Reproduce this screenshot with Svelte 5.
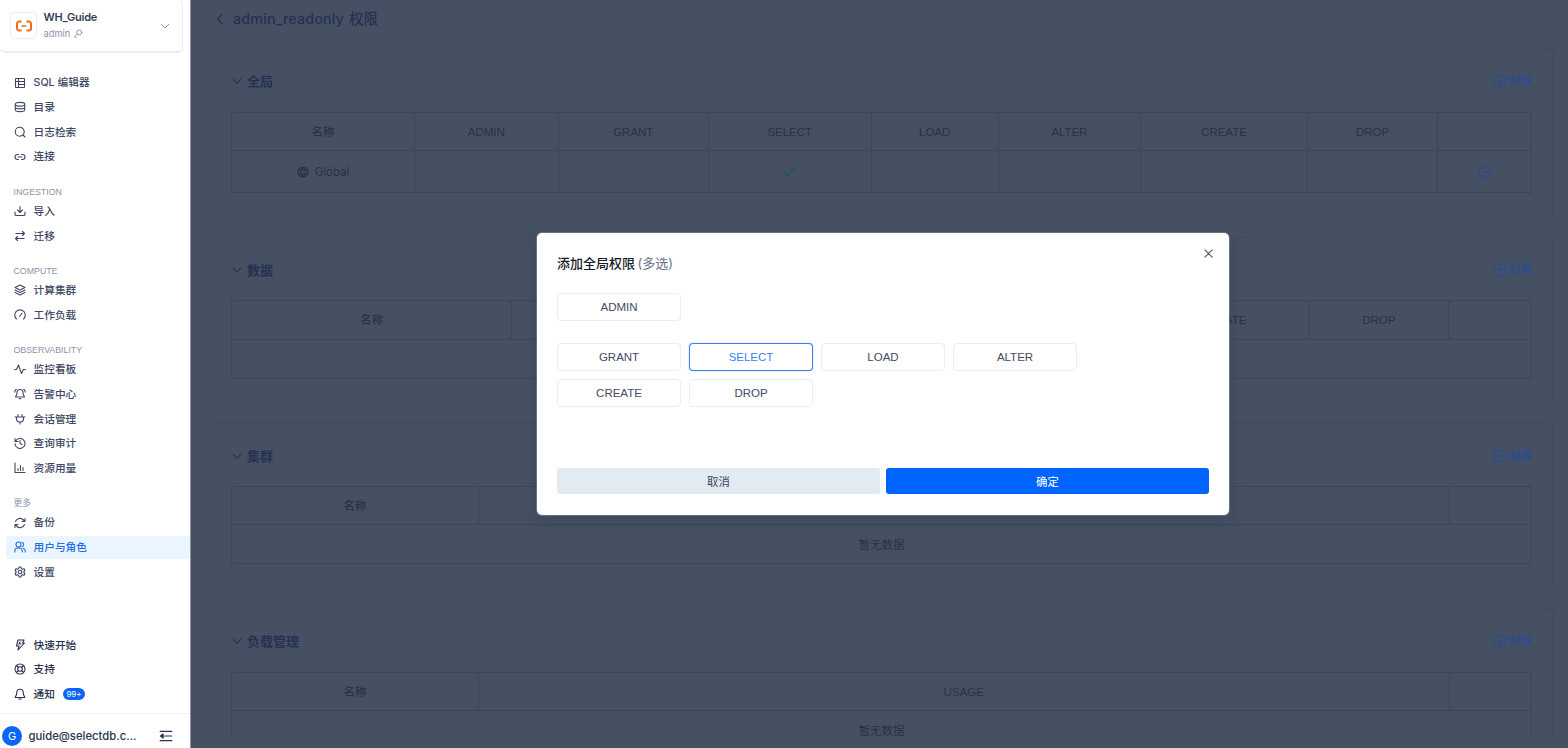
<script lang="ts">
  type Item = { icon: string; label: string; active?: boolean; badge?: string };
  type Group = { title?: string; items: Item[] };
  type Section = { title: string; cols: string[]; widths: number[]; global?: boolean };

  const icons: Record<string, string> = {
    table: 'M4 3h16a1 1 0 0 1 1 1v16a1 1 0 0 1-1 1H4a1 1 0 0 1-1-1V4a1 1 0 0 1 1-1zM9 3v18M3 9h18M9 15h12',
    database: 'M2.5 6.5c0-5 19-5 19 0s-19 5-19 0zM2.5 6.5v11c0 5 19 5 19 0v-11M2.5 12c0 5 19 5 19 0',
    search: 'M20.500 11.500a9 9 0 1 1-18 0 9 9 0 0 1 18 0zM18 18l4 4',
    link: 'M9 17H7A5 5 0 0 1 7 7h2M15 7h2a5 5 0 0 1 0 10h-2M8 12h8',
    download: 'M2 14v5a2 2 0 0 0 2 2h16a2 2 0 0 0 2-2v-5M7 10l5 5 5-5M12 15V3',
    swap: 'M17 3l4 4-4 4M21 7H4M7 21l-4-4 4-4M3 17h17',
    layers: 'M12 2L2 7l10 5 10-5-10-5zM2 12l10 5 10-5M2 17l10 5 10-5',
    gauge: 'M5 20a10.500 10.500 0 1 1 14 0M11.500 14.500l4.500-6',
    activity: 'M1 13h4l4-9 6 17 4-8h4',
    alarm: 'M6 9a6 6 0 0 1 12 0c0 6 3 8 3 9H3c0-1 3-3 3-9zM10 21.500h4M1.500 8c0-2 1-4 3-5.500M22.500 8c0-2-1-4-3-5.500',
    plug: 'M12 22v-4M8 7V3M16 7V3M2 8h20M5 8v4a7 6 0 0 0 14 0V8',
    history: 'M2 3v6h6M3 8.500A10 10 0 1 1 2 13M12 7v6l4 2',
    chart: 'M2 2v19h20M8 17v-4M13 17V7M18 17v-6',
    refresh: 'M22 3v6h-6M2 21v-6h6M3 9a9.500 9.500 0 0 1 15.500-3.500L22 9M2 15l3.500 3.500A9.500 9.500 0 0 0 21 15',
    users: 'M1.500 22v-2a6 6 0 0 1 6-6h3a6 6 0 0 1 6 6v2M14 7a5 5 0 1 1-10 0 5 5 0 0 1 10 0zM16 2.300a5 5 0 0 1 0 9.400M22.500 22v-2a6 6 0 0 0-4-5.500',
    gear: 'M10 2h4l.7 3 2.300 1.300 3-1 2 3.500L19.800 11v2l2.200 2.200-2 3.500-3-1-2.300 1.300-.7 3h-4l-.7-3L7 17.700l-3 1-2-3.500L4.200 13v-2L2 8.800l2-3.500 3 1L9.300 5zM15.500 12a3.500 3.500 0 1 1-7 0 3.500 3.500 0 0 1 7 0z',
    bolt: 'M8 2h12l-3 6h4L8 22l2-8H5L8 2zM12 6l-2 4h4',
    support: 'M22 12a10 10 0 1 1-20 0 10 10 0 0 1 20 0zM16.500 12a4.500 4.500 0 1 1-9 0 4.500 4.500 0 0 1 9 0zM5 5l4 4M15 9l4-4M15 15l4 4M9 15l-4 4',
    bell: 'M5.500 9a6.500 6.500 0 0 1 13 0c0 6 3 8 3 10h-19c0-2 3-4 3-10zM9.500 22h5',
    key: 'M21 8a6 6 0 1 1-12 0 6 6 0 0 1 12 0zM10.500 12.500L3 20M5 18l3 3',
    down: 'M3 8l9 9 9-9',
    left: 'M16 3l-9 9 9 9',
    fold: 'M2 4h20M11 12h11M2 20h20M7 8.500L2.500 12 7 15.500zM3 12h6',
    plus: 'M22 12a10 10 0 1 1-20 0 10 10 0 0 1 20 0zM12 8v8M8 12h8',
    minus: 'M22 12a10 10 0 1 1-20 0 10 10 0 0 1 20 0zM8 12h8',
    globe: 'M22 12a10 10 0 1 1-20 0 10 10 0 0 1 20 0zM12 2c-6 6-6 14 0 20M12 2c6 6 6 14 0 20M3.500 8h17M3.500 16h17',
    check: 'M2 13l6 6L22 4',
    close: 'M4 4l16 16M20 4L4 20',
  };

  const groups: Group[] = [
    {
      items: [
        { icon: 'table', label: 'SQL 编辑器' },
        { icon: 'database', label: '目录' },
        { icon: 'search', label: '日志检索' },
        { icon: 'link', label: '连接' },
      ],
    },
    {
      title: 'INGESTION',
      items: [
        { icon: 'download', label: '导入' },
        { icon: 'swap', label: '迁移' },
      ],
    },
    {
      title: 'COMPUTE',
      items: [
        { icon: 'layers', label: '计算集群' },
        { icon: 'gauge', label: '工作负载' },
      ],
    },
    {
      title: 'OBSERVABILITY',
      items: [
        { icon: 'activity', label: '监控看板' },
        { icon: 'alarm', label: '告警中心' },
        { icon: 'plug', label: '会话管理' },
        { icon: 'history', label: '查询审计' },
        { icon: 'chart', label: '资源用量' },
      ],
    },
    {
      title: '更多',
      items: [
        { icon: 'refresh', label: '备份' },
        { icon: 'users', label: '用户与角色', active: true },
        { icon: 'gear', label: '设置' },
      ],
    },
  ];

  const helpItems: Item[] = [
    { icon: 'bolt', label: '快速开始' },
    { icon: 'support', label: '支持' },
    { icon: 'bell', label: '通知', badge: '99+' },
  ];

  const sections: Section[] = [
    {
      title: '全局',
      cols: ['名称', 'ADMIN', 'GRANT', 'SELECT', 'LOAD', 'ALTER', 'CREATE', 'DROP', ''],
      widths: [183, 143.5, 150.5, 162.5, 127.5, 142, 167, 130, 93],
      global: true,
    },
    {
      title: '数据',
      cols: ['名称', 'GRANT', 'SELECT', 'LOAD', 'ALTER', 'CREATE', 'DROP', ''],
      widths: [280, 156, 156, 156, 157, 171, 139, 82],
    },
    { title: '集群', cols: ['名称', 'USAGE', ''], widths: [247, 971, 81.5] },
    { title: '负载管理', cols: ['名称', 'USAGE', ''], widths: [247, 971, 81.5] },
  ];

  const privileges = ['GRANT', 'SELECT', 'LOAD', 'ALTER', 'CREATE', 'DROP'];
  let selected = $state(['SELECT']);
  let open = $state(true);

  function toggle(name: string) {
    selected = selected.includes(name) ? selected.filter((n) => n !== name) : [...selected, name];
  }

  const columns = (widths: number[]) => widths.map((w) => `${w}fr`).join(' ');
</script>

{#snippet icon(name: string, size = 12, stroke = 2)}
  <svg class="icon" width={size} height={size} viewBox="0 0 24 24" stroke-width={stroke}>
    <path d={icons[name]} />
  </svg>
{/snippet}

{#snippet navItem(item: Item)}
  <div class="nav-item" class:active={item.active}>
    {@render icon(item.icon, 12, 2.200)}
    <span class="label">{item.label}</span>
    {#if item.badge}<span class="badge">{item.badge}</span>{/if}
  </div>
{/snippet}

<div class="app">
  <aside class="sidebar">
    <div class="warehouse">
      <div class="logo">
        <svg width="18" height="14" viewBox="0 0 18 14">
          <path d="M6.500 2.500H4.200A2.200 2.200 0 0 0 2 4.700v4.600a2.200 2.200 0 0 0 2.200 2.200h2.300M11.500 2.500h2.300A2.200 2.200 0 0 1 16 4.700v4.600a2.200 2.200 0 0 1-2.200 2.200h-2.300" stroke-width="2" />
          <path d="M6.500 7h5" stroke-width="1.500" />
        </svg>
      </div>
      <div class="who">
        <strong>WH_Guide</strong>
        <span>admin {@render icon('key', 10, 2.200)}</span>
      </div>
      {@render icon('down', 10, 2.400)}
    </div>

    <nav>
      {#each groups as group}
        {#if group.title}<div class="group-title">{group.title}</div>{/if}
        {#each group.items as item}{@render navItem(item)}{/each}
      {/each}
    </nav>

    <div class="help">
      {#each helpItems as item}{@render navItem(item)}{/each}
    </div>

    <footer>
      <span class="avatar">G</span>
      <span class="email">guide@selectdb.c...</span>
      {@render icon('fold', 14, 2)}
    </footer>
  </aside>

  <main>
    <h1>{@render icon('left', 12, 2.200)}<span>admin_readonly 权限</span></h1>
    <div class="sections">
      {#each sections as section}
        <section>
          <header>
            {@render icon('down', 10, 2.600)}
            <h2>{section.title}</h2>
            <span class="add">{@render icon('plus', 14, 2.200)}权限</span>
          </header>
          <div class="table">
            <div class="row head" style="grid-template-columns: {columns(section.widths)}">
              {#each section.cols as col}<div class="cell">{col}</div>{/each}
            </div>
            {#if section.global}
              <div class="row" style="grid-template-columns: {columns(section.widths)}">
                {#each section.cols as col, i}
                  <div class="cell">
                    {#if i === 0}
                      {@render icon('globe', 12, 2.200)}<span class="scope">Global</span>
                    {:else if col === 'SELECT'}
                      <span class="granted">{@render icon('check', 13, 2.200)}</span>
                    {:else if i === section.cols.length - 1}
                      <span class="remove">{@render icon('minus', 14, 2.200)}</span>
                    {/if}
                  </div>
                {/each}
              </div>
            {:else}
              <div class="empty">暂无数据</div>
            {/if}
          </div>
        </section>
      {/each}
    </div>
  </main>

  {#if open}
    <div class="dialog" role="dialog" aria-label="添加全局权限">
      <button class="close" aria-label="关闭" onclick={() => (open = false)}>{@render icon('close', 11, 2.500)}</button>
      <h3>添加全局权限 <span>(多选)</span></h3>
      <div class="options first">
        <button class="option" class:selected={selected.includes('ADMIN')} onclick={() => toggle('ADMIN')}>ADMIN</button>
      </div>
      <div class="options">
        {#each privileges as name}
          <button class="option" class:selected={selected.includes(name)} onclick={() => toggle(name)}>{name}</button>
        {/each}
      </div>
      <div class="actions">
        <button class="cancel" onclick={() => (open = false)}>取消</button>
        <button class="confirm" onclick={() => (open = false)}>确定</button>
      </div>
    </div>
  {/if}
</div>

<style>
  :global(body) {
    overflow: hidden;
  }

  .app {
    position: relative;
    display: flex;
    width: 100vw;
    height: 100vh;
    overflow: hidden;
    background: #455063;
    font-family: Inter, 'Noto Sans CJK SC', sans-serif;
    font-size: 11px;
    color: #3e4862;
  }

  .app * {
    box-sizing: border-box;
  }

  button {
    font: inherit;
    cursor: pointer;
  }

  .icon {
    flex: none;
    fill: none;
    stroke: currentColor;
    stroke-linecap: round;
    stroke-linejoin: round;
  }

  .sidebar {
    display: flex;
    flex-direction: column;
    flex: none;
    width: 191px;
    border-right: 1px solid #8b95a5;
    background: #fff;
  }

  .warehouse {
    display: flex;
    align-items: center;
    width: 183px;
    height: 53px;
    padding: 0 12px 0 10px;
    border: solid #e8edf5;
    border-width: 0 1px 2px 0;
    border-radius: 5px;
    color: #8992a6;
  }

  .logo {
    display: flex;
    align-items: center;
    justify-content: center;
    width: 27px;
    height: 27px;
    border: 1px solid #eaeef5;
    border-radius: 4px;
  }

  .logo svg {
    fill: none;
    stroke: #ee6c14;
  }

  .who {
    display: flex;
    flex: 1;
    flex-direction: column;
    gap: 3px;
    margin-left: 6.500px;
    line-height: 14px;
  }

  .who strong {
    font-size: 11px;
    font-weight: 600;
    letter-spacing: -0.25px;
    color: #343e58;
  }

  .who span {
    display: flex;
    align-items: center;
    gap: 3px;
    font-size: 9.300px;
  }

  nav,
  .help {
    display: flex;
    flex-direction: column;
  }

  nav {
    padding-top: 17.300px;
  }

  .group-title {
    height: 29.750px;
    padding: 15.500px 0 0 13.500px;
    font-family: 'Liberation Sans', 'Noto Sans CJK SC', sans-serif;
    font-size: 8.800px;
    line-height: 15px;
    color: #8a93aa;
  }

  .nav-item {
    display: flex;
    align-items: center;
    gap: 8px;
    height: 22.700px;
    margin: 1px 0 1px 6px;
    padding-left: 7.500px;
    border-radius: 4px 0 0 4px;
    font-size: 10.700px;
    font-weight: 500;
    line-height: 16px;
  }

  .label {
    padding-top: 1.500px;
  }

  .active {
    background: #ebf5ff;
    color: #1f6ee8;
  }

  .badge {
    height: 12px;
    padding: 0 3.500px;
    border-radius: 6px;
    background: #0b66f5;
    font-size: 8px;
    font-weight: 400;
    line-height: 12px;
    color: #fff;
  }

  .help {
    margin-top: auto;
    padding-bottom: 6.500px;
    color: #29334c;
  }

  footer {
    display: flex;
    align-items: center;
    height: 35px;
    padding: 10px 17px 0 2px;
    border-top: 1px solid #edf0f4;
    color: #29334c;
  }

  .avatar {
    width: 20px;
    height: 20px;
    border-radius: 50%;
    background: #0b66f5;
    line-height: 20px;
    text-align: center;
    color: #fff;
  }

  .email {
    flex: 1;
    margin-left: 6.500px;
    font-size: 11.300px;
    font-weight: 500;
  }

  main {
    flex: 1;
    min-width: 0;
    height: 738px;
    padding: 0 15px 0 19px;
    overflow: hidden;
    color: #273247;
  }

  h1 {
    display: flex;
    align-items: center;
    gap: 7px;
    height: 37px;
    margin: 0 0 11px;
    padding-left: 4px;
    font-size: 14.400px;
    font-weight: 500;
    line-height: 20px;
    letter-spacing: 0.1px;
    word-spacing: 1px;
    color: #253150;
  }

  .sections {
    display: flex;
    flex-direction: column;
    gap: 19.700px;
  }

  section {
    padding: 0 20px 23px;
    border: 1px solid #404b5e;
    border-radius: 4px;
  }

  header {
    display: flex;
    align-items: center;
    gap: 5px;
    height: 62.500px;
    padding: 2px 0 0 1px;
    color: #253150;
  }

  h2 {
    flex: 1;
    margin: 0;
    font-size: 13px;
    font-weight: 600;
    line-height: 18px;
  }

  .add {
    display: flex;
    align-items: center;
    gap: 2px;
    font-size: 11.400px;
    font-weight: 500;
    line-height: 16px;
    color: #2a4c92;
  }

  .table {
    border: 1px solid #3b4659;
    border-radius: 2px;
    font-size: 11.500px;
  }

  .row {
    display: grid;
    height: 41px;
  }

  .head {
    height: 38.500px;
    border-bottom: 1px solid #3b4659;
    font-family: 'Liberation Sans', 'Noto Sans CJK SC', sans-serif;
    font-weight: 500;
  }

  .cell {
    display: flex;
    align-items: center;
    justify-content: center;
    min-width: 0;
    border-right: 1px solid #3b4659;
    line-height: 16px;
  }

  .head .cell {
    padding-top: 1px;
  }

  .cell:last-child {
    border-right: 0;
  }

  .scope {
    margin-left: 6px;
  }

  .granted,
  .remove {
    display: flex;
    color: #19575f;
  }

  .remove {
    color: #2a4c92;
  }

  .empty {
    height: 38px;
    line-height: 40px;
    text-align: center;
  }

  .dialog {
    position: absolute;
    top: 233px;
    left: 537px;
    display: flex;
    flex-direction: column;
    width: 692px;
    height: 282px;
    padding: 20px 20px 21px;
    border-radius: 5px;
    background: #fff;
    box-shadow: 0 0 0 1px rgba(160, 172, 190, 0.4), 0 6px 16px rgba(20, 30, 50, 0.15);
  }

  .close {
    position: absolute;
    top: 15px;
    right: 15px;
    display: flex;
    padding: 0;
    border: 0;
    background: none;
    color: #4f5563;
  }

  h3 {
    margin: 0 0 20px;
    font-size: 13px;
    font-weight: 500;
    line-height: 20px;
    word-spacing: -1px;
    color: #151a26;
  }

  h3 span {
    font-weight: 400;
    color: #687289;
  }

  .options {
    display: grid;
    grid-template-columns: repeat(4, 124px);
    gap: 8px;
  }

  .first {
    margin-bottom: 21.500px;
  }

  .option {
    height: 28px;
    padding: 0;
    border: 1px solid #e8edf5;
    border-radius: 4px;
    background: #fff;
    font-family: 'Liberation Sans', Arial, sans-serif;
    font-size: 11.500px;
    color: #434b60;
  }

  .selected {
    border-color: #3b80f2;
    box-shadow: 0 0 1px #3b80f2;
    color: #3b82f6;
  }

  .actions {
    display: grid;
    grid-template-columns: 1fr 1fr;
    gap: 6px;
    margin-top: auto;
  }

  .actions button {
    height: 26px;
    padding: 0 0 1px;
    border: 0;
    border-radius: 3px;
    font-size: 11.400px;
  }

  .cancel {
    background: #e2eaf2;
    color: #3c465a;
  }

  .actions .confirm {
    background: #0065ff;
    color: #fff;
  }
</style>
